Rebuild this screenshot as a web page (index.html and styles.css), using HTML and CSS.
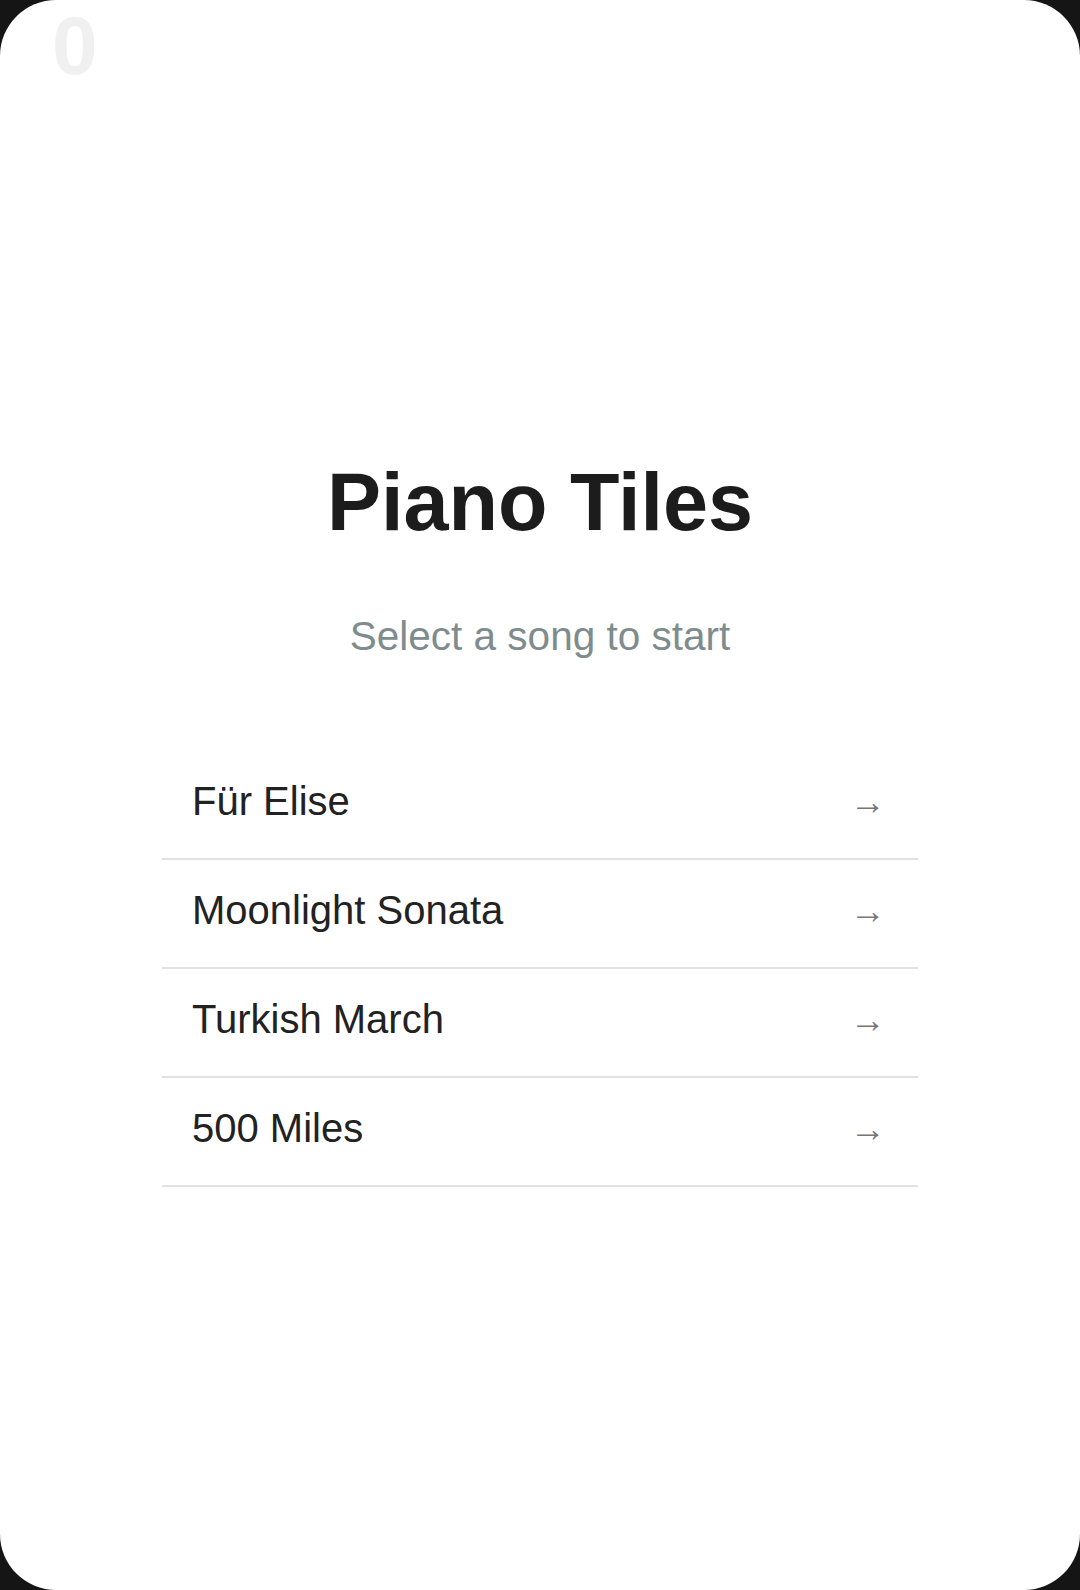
FILE: index.html
```html
<!DOCTYPE html>
<html lang="en">
  <head>
    <meta charset="UTF-8" />
    <meta name="viewport" content="width=device-width, initial-scale=1.0" />
    <title>Piano Tiles</title>
    <link rel="stylesheet" href="styles.css">
  </head>
  <body>
    <div class="game">
      <div class="score">0</div>

      <div class="menu">
        <h1>Piano Tiles</h1>
        <p class="subtitle">Select a song to start</p>

        <ul class="songs">
          <li class="song"><span>Für Elise</span><span class="arrow">→</span></li>
          <li class="song"><span>Moonlight Sonata</span><span class="arrow">→</span></li>
          <li class="song"><span>Turkish March</span><span class="arrow">→</span></li>
          <li class="song"><span>500 Miles</span><span class="arrow">→</span></li>
        </ul>
      </div>
    </div>
  </body>
</html>
```

FILE: styles.css
```css
body {
  margin: 0;
  background: #151515;
  font-family: "Liberation Sans", Arial, sans-serif;
}
.game {
  position: relative;
  height: 1590px;
  background: #fff;
  border-radius: 56px;
  overflow: hidden;
}
.score {
  position: absolute;
  top: 5px;
  left: 52px;
  font-size: 82px;
  font-weight: bold;
  line-height: 1;
  color: #f0f0f0;
}
.menu {
  display: flex;
  flex-direction: column;
  align-items: center;
  padding-top: 456px;
}
h1 {
  margin: 0;
  font-size: 81px;
  color: #1c1c1c;
}
.subtitle {
  margin: 64px 0 0;
  font-size: 40.5px;
  color: #7f8c8d;
}
.songs {
  list-style: none;
  margin: 91px 0 0;
  padding: 0;
  width: 70%;
}
.song {
  display: flex;
  justify-content: space-between;
  align-items: center;
  padding: 28px 32px 34px 30px;
  font-size: 40px;
  color: #222;
  border-bottom: 2px solid #e2e2e2;
  cursor: pointer;
}
.arrow {
  font-size: 36px;
  color: #777;
}
```
